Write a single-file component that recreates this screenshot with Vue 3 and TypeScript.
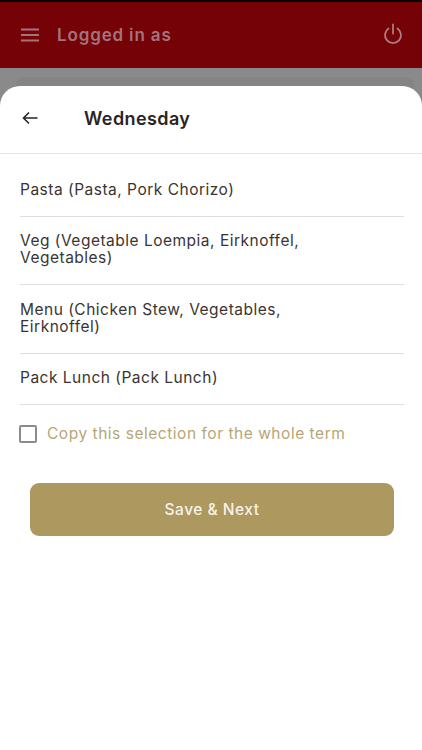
<script setup lang="ts">
const rows: string[] = [
  'Pasta (Pasta, Pork Chorizo)',
  'Veg (Vegetable Loempia, Eirknoffel, Vegetables)',
  'Menu (Chicken Stew, Vegetables, Eirknoffel)',
  'Pack Lunch (Pack Lunch)',
]
</script>

<template>
  <div class="page">
    <header class="topbar">
      <div class="left">
        <svg class="menu" width="18" height="14" viewBox="0 0 18 14" fill="none" stroke="#a5737a" stroke-width="2">
          <path d="M0 1.5h18M0 7h18M0 12.500h18" />
        </svg>
        <span class="logged">Logged in as</span>
      </div>
      <svg class="power" width="20" height="22" viewBox="0 0 20 22" fill="none" stroke="#b07c80" stroke-width="1.800" stroke-linecap="round">
        <path d="M10 1.500v9" />
        <path d="M5.500 5.500a8 8 0 1 0 9 0" />
      </svg>
    </header>
    <div class="backdrop">
      <div class="behind"></div>
    </div>
    <main class="sheet">
      <div class="sheet-head">
        <svg class="back" width="16" height="14" viewBox="0 0 16 14" fill="none" stroke="#2a2422" stroke-width="1.600">
          <path d="M15.500 7H1.500M7 1.500 1.500 7 7 12.500" />
        </svg>
        <h1 class="title">Wednesday</h1>
      </div>
      <ul class="list">
        <li v-for="row in rows" :key="row" class="row"><span class="row-text">{{ row }}</span></li>
      </ul>
      <label class="copy">
        <span class="box"></span>
        <span class="copy-text">Copy this selection for the whole term</span>
      </label>
      <button class="save" type="button">Save &amp; Next</button>
    </main>
  </div>
</template>

<style>
html, body { margin: 0; padding: 0; background: #fff; }
</style>

<style scoped>
.page {
  width: 422px;
  height: 750px;
  overflow: hidden;
  background: #fff;
  font-family: "Inter", "Open Sans", sans-serif;
  display: flex;
  flex-direction: column;
}
.topbar {
  height: 66px;
  border-top: 2px solid #0a0000;
  background: #740207;
  display: flex;
  align-items: center;
  justify-content: space-between;
  padding: 0 19px 0 21px;
  flex: none;
}
.left { display: flex; align-items: center; gap: 18px; }
.menu, .power, .back { display: block; flex: none; }
.power { margin-bottom: 2px; }
.back { margin-bottom: 2px; }
.logged {
  color: #a5737a;
  font-size: 17px;
  font-weight: 600;
  letter-spacing: 0.85px;
}
.backdrop {
  height: 38px;
  background: #8a8a8a;
  flex: none;
  position: relative;
  overflow: hidden;
}
.behind {
  position: absolute;
  left: 16px;
  right: 8px;
  top: 9px;
  height: 29px;
  background: #848484;
  border-radius: 8px 8px 0 0;
}
.sheet {
  flex: 1;
  margin-top: -20px;
  background: #fff;
  border-radius: 20px 20px 0 0;
  position: relative;
}
.sheet-head {
  height: 65px;
  border-bottom: 1.500px solid #e5e5e5;
  display: flex;
  align-items: center;
  padding-left: 22px;
  padding-bottom: 2px;
  box-sizing: content-box;
}
.title {
  margin: 0 0 0 46px;
  font-size: 18px;
  font-weight: 600;
  letter-spacing: 0.4px;
  color: #2a2422;
}
.list {
  list-style: none;
  margin: 11px 18px 0 20px;
  padding: 0;
}
.row {
  padding: 15.500px 0 18px;
  border-bottom: 1.500px solid #dedede;
  font-size: 15.500px;
  letter-spacing: 0.5px;
  line-height: 17px;
  color: #3a3533;
}
.row-text { display: block; max-width: 300px; }
.copy {
  display: flex;
  align-items: center;
  gap: 10px;
  margin: 19px 0 0 19px;
}
.box {
  width: 14px;
  height: 14px;
  border: 2px solid #8c8c8c;
  border-radius: 2px;
  flex: none;
}
.copy-text {
  color: #b6a677;
  font-size: 15.500px;
  letter-spacing: 0.53px;
}
.save {
  display: block;
  width: 364px;
  height: 53px;
  margin: 40px 0 0 30px;
  border: none;
  border-radius: 9px;
  background: #ad9860;
  color: #f7f3e9;
  font-family: inherit;
  font-size: 15.500px;
  letter-spacing: 0.5px;
  font-weight: 500;
}
</style>
